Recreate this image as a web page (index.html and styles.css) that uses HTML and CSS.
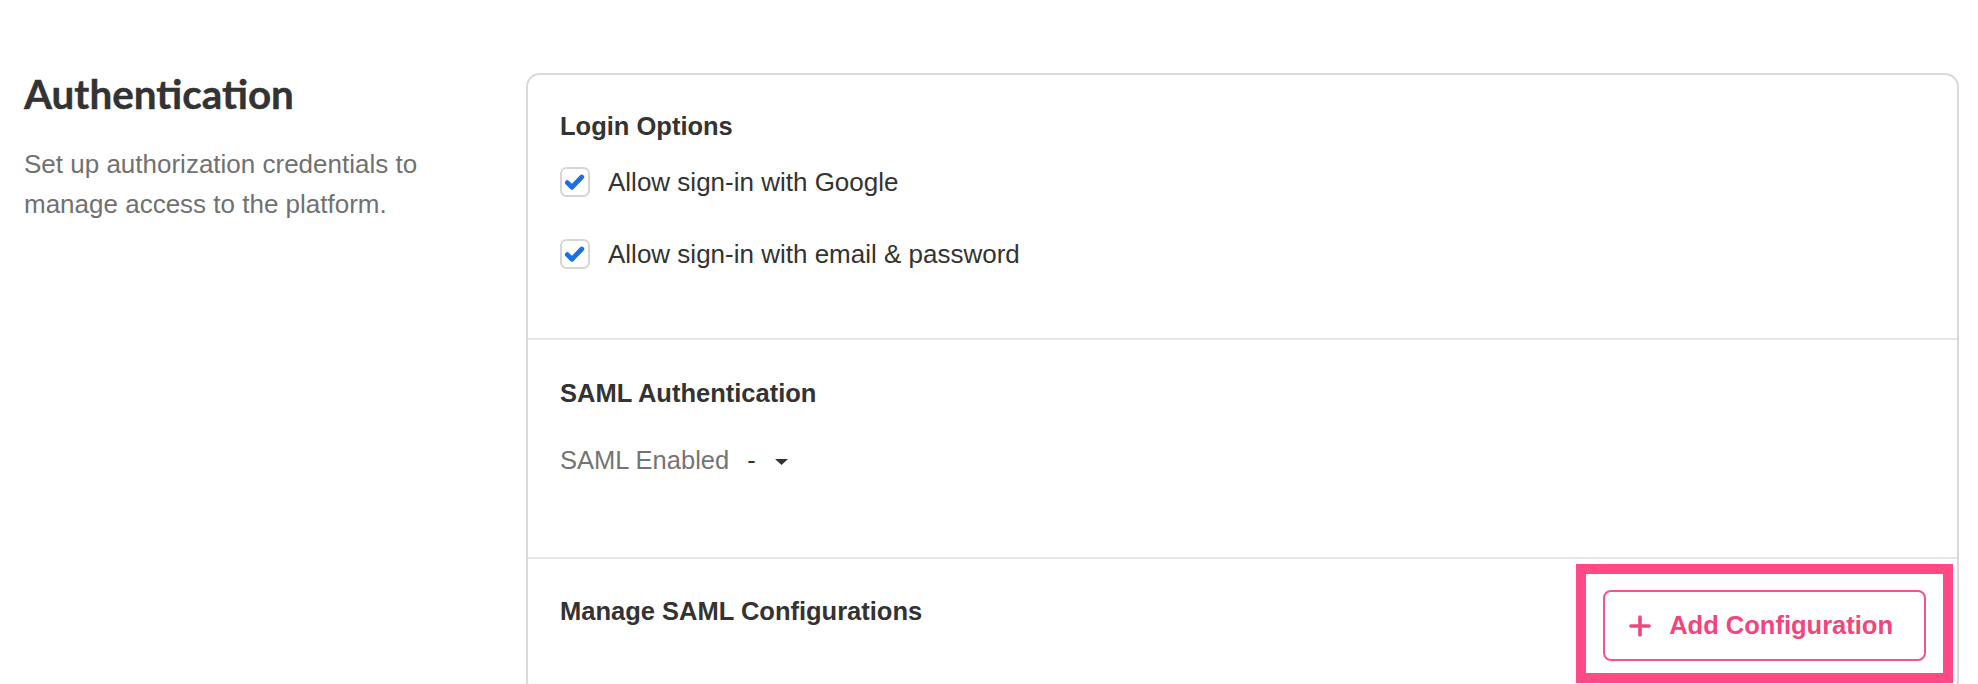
FILE: index.html
```html
<!DOCTYPE html>
<html lang="en">
<head>
<meta charset="utf-8">
<title>Authentication</title>
<link rel="stylesheet" href="styles.css">
</head>
<body>
<main class="page">
  <aside class="intro">
    <h1 class="intro-title">Authentication</h1>
    <p class="intro-text">Set up authorization credentials to manage access to the platform.</p>
  </aside>
  <section class="card">
    <div class="card-section section-login">
      <h2 class="section-title">Login Options</h2>
      <div class="options">
        <label class="option">
          <svg class="checkbox" width="30" height="30" viewBox="0 0 30 30" aria-hidden="true">
            <rect x="1" y="1" width="28" height="28" rx="5.5" fill="#fff" stroke="#d6d6d6" stroke-width="2"/>
            <path d="M7.3 15.6 L12 20.2 L21.8 10" fill="none" stroke="#1a6fe6" stroke-width="4.8" stroke-linecap="round" stroke-linejoin="round"/>
          </svg>
          <span class="option-label">Allow sign-in with Google</span>
        </label>
        <label class="option">
          <svg class="checkbox" width="30" height="30" viewBox="0 0 30 30" aria-hidden="true">
            <rect x="1" y="1" width="28" height="28" rx="5.5" fill="#fff" stroke="#d6d6d6" stroke-width="2"/>
            <path d="M7.3 15.6 L12 20.2 L21.8 10" fill="none" stroke="#1a6fe6" stroke-width="4.8" stroke-linecap="round" stroke-linejoin="round"/>
          </svg>
          <span class="option-label">Allow sign-in with email &amp; password</span>
        </label>
      </div>
    </div>
    <div class="card-section section-saml">
      <h2 class="section-title">SAML Authentication</h2>
      <div class="field">
        <span class="field-label">SAML Enabled</span>
        <span class="select">
          <span class="select-value">-</span>
          <svg class="caret" width="13" height="6" viewBox="0 0 13 6" aria-hidden="true">
            <path d="M0 0 H13 L6.5 6 Z" fill="#333"/>
          </svg>
        </span>
      </div>
    </div>
    <div class="card-section section-configs">
      <h2 class="section-title config-title">Manage SAML Configurations</h2>
      <div class="highlight">
        <button class="btn-add" type="button">
          <svg class="plus" width="22" height="22" viewBox="0 0 22 22" aria-hidden="true">
            <path d="M11 2 V20 M2 11 H20" fill="none" stroke="#f2457e" stroke-width="3.6" stroke-linecap="round"/>
          </svg>
          <span>Add Configuration</span>
        </button>
      </div>
    </div>
  </section>
</main>
</body>
</html>
```

FILE: styles.css
```css
* {
  box-sizing: border-box;
}

html,
body {
  margin: 0;
  padding: 0;
  background: #ffffff;
  overflow: hidden;
}

body {
  font-family: "Liberation Sans", Arial, sans-serif;
  color: #333333;
}

.page {
  display: flex;
  align-items: flex-start;
  padding: 70px 19px 0 24px;
}

.intro {
  flex: 0 0 502px;
  padding-right: 80px;
}

.intro-title {
  margin: 0;
  font-family: Lato, "Liberation Sans", sans-serif;
  font-weight: 700;
  font-size: 40.4px;
  line-height: 48px;
  color: #333333;
  -webkit-text-stroke: 0.4px #333333;
}

.intro-text {
  margin: 25.8px 0 0;
  font-size: 26px;
  line-height: 40px;
  color: #717171;
}

.card {
  flex: 1;
  margin-top: 3px;
  border: 2px solid #d9d9d9;
  border-radius: 14px;
  background: #ffffff;
}

.card-section {
  padding: 37.7px 31px 0 32px;
}

.card-section + .card-section {
  border-top: 2px solid #e5e5e5;
}

.section-title {
  margin: 0;
  font-size: 25.5px;
  line-height: 30px;
  font-weight: 700;
  color: #333333;
}

.section-login {
  padding-top: 36px;
  padding-bottom: 69px;
}

.options {
  display: flex;
  flex-direction: column;
  gap: 42.3px;
  margin-top: 25.7px;
}

.option {
  display: flex;
  align-items: center;
  gap: 18px;
  height: 30px;
}

.checkbox {
  flex: 0 0 30px;
  display: block;
}

.option-label {
  font-size: 26px;
  line-height: 30px;
  color: #333333;
}

.section-saml {
  padding-bottom: 82px;
}

.field {
  display: flex;
  align-items: center;
  margin-top: 37.3px;
  height: 30px;
}

.field-label {
  font-size: 25.5px;
  line-height: 30px;
  color: #747474;
}

.select {
  display: flex;
  align-items: center;
  margin-left: 18px;
}

.select-value {
  font-size: 25.5px;
  line-height: 30px;
  color: #333333;
}

.caret {
  display: block;
  margin-left: 19px;
  margin-top: 5px;
}

.section-configs {
  display: flex;
  justify-content: space-between;
  align-items: flex-start;
  padding-top: 31.5px;
  padding-bottom: 32px;
}

.config-title {
  margin-top: 5.5px;
}

.highlight {
  position: relative;
  display: flex;
}

.highlight::after {
  content: "";
  position: absolute;
  top: -26px;
  left: -27px;
  right: -27px;
  bottom: -22px;
  border: 10px solid #ff4a86;
  pointer-events: none;
}

.btn-add {
  display: inline-flex;
  align-items: center;
  gap: 18px;
  height: 71px;
  margin: 0;
  padding: 0 31px 0 24px;
  border: 2px solid #f4538b;
  border-radius: 8px;
  background: #ffffff;
  font-family: "Liberation Sans", Arial, sans-serif;
  font-size: 25.5px;
  font-weight: 700;
  color: #f2457e;
  cursor: pointer;
}

.plus {
  display: block;
  flex: 0 0 22px;
}
```
